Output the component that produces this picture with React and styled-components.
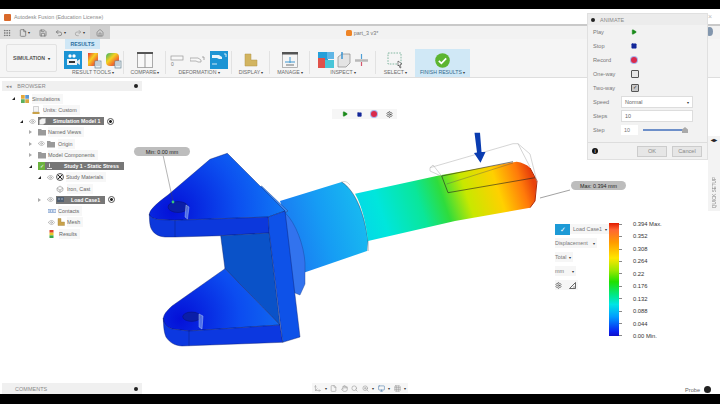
import React from "react";
import styled, { createGlobalStyle } from "styled-components";
import { Play, Square, Settings, Hand, Search, ZoomIn, Monitor, Grid3x3, File, Save, Undo2, Redo2, Home, Grip, Move3d, Eye } from "lucide-react";

const Global = createGlobalStyle`
  html, body { margin: 0; padding: 0; background: #fff; }
  body { font-family: "Liberation Sans", Arial, sans-serif; }
`;

const Page = styled.div`
  width: 720px;
  height: 404px;
  overflow: hidden;
  display: flex;
  flex-direction: column;
  background: #fff;
`;
const BlackBar = styled.div`
  height: ${(p) => p.$h}px;
  flex: none;
  background: #000;
`;
const TitleBar = styled.div`
  height: 14px;
  flex: none;
  display: flex;
  align-items: center;
  gap: 3px;
  padding: 1px 0 0 4px;
  font-size: 5.4px;
  color: #8a8a8a;
`;
const AppIcon = styled.span`
  width: 7px;
  height: 7px;
  background: #d9692a;
  border-radius: 1px;
`;
const QuickBar = styled.div`
  height: 13px;
  flex: none;
  border-top: 2px solid #c9c9c9;
  background: #f2f2f2;
  display: flex;
  align-items: center;
  position: relative;
`;
const QuickLeft = styled.div`
  width: 90px;
  height: 100%;
  background: #dcdcdc;
  display: flex;
  align-items: center;
  padding-left: 3px;
  box-sizing: border-box;
  color: #666;
`;
const QuickSlot = styled.span`
  width: ${(p) => p.$w}px;
  flex: none;
  display: flex;
  align-items: center;
  gap: 1px;
  color: ${(p) => p.$c || "#666"};
`;
const HomeTab = styled.div`
  width: 20px;
  height: 100%;
  background: #cfcfcf;
  display: flex;
  align-items: center;
  justify-content: center;
  color: #777;
`;
const DocTitle = styled.div`
  flex: 1;
  display: flex;
  justify-content: center;
  align-items: center;
  gap: 2px;
  font-size: 5.4px;
  color: #777;
  padding-right: 106px;
`;
const DocIcon = styled.span`
  width: 6px;
  height: 6px;
  border-radius: 1.5px;
  background: #ee8426;
`;
const UserBadge = styled.span`
  position: absolute;
  left: 706px;
  top: 1px;
  width: 7px;
  height: 9px;
  border-radius: 50%;
  background: #8296ad;
`;
const Ribbon = styled.div`
  height: 39px;
  flex: none;
  box-sizing: border-box;
  background: #f5f5f5;
  border-bottom: 1px solid #dedede;
  display: flex;
`;
const SimButton = styled.div`
  width: 51px;
  height: 28px;
  margin: 5px 5px 0 6px;
  flex: none;
  box-sizing: border-box;
  border: 1px solid #e2e2e2;
  border-radius: 2px;
  display: flex;
  align-items: center;
  justify-content: center;
  gap: 3px;
  font-size: 5.2px;
  font-weight: 700;
  color: #555;
`;
const Group = styled.div`
  width: ${(p) => p.$w}px;
  flex: none;
  position: relative;
  box-sizing: border-box;
  display: flex;
  flex-direction: column;
  align-items: center;
  background: ${(p) => (p.$active ? "#d0e8f6" : "transparent")};
  margin-top: ${(p) => (p.$active ? 10 : 0)}px;
  padding-top: ${(p) => (p.$active ? 2 : 12)}px;
  &::after {
    content: "";
    display: ${(p) => (p.$sep ? "block" : "none")};
    position: absolute;
    right: 0;
    top: 12px;
    bottom: 3px;
    width: 1px;
    background: #e2e2e2;
  }
`;
const RibbonTab = styled.div`
  position: absolute;
  left: 3px;
  top: 0;
  width: 35px;
  height: 10px;
  background: #cfe7f6;
  color: #2b6f9e;
  font-size: 5.2px;
  font-weight: 700;
  display: flex;
  align-items: center;
  justify-content: center;
`;
const IconRow = styled.div`
  height: 18px;
  display: flex;
  align-items: center;
  gap: ${(p) => p.$gap || 5}px;
`;
const GroupLabel = styled.div`
  font-size: 5.2px;
  color: ${(p) => (p.$active ? "#33688c" : "#6b6b6b")};
  white-space: nowrap;
  &::after { content: " ▾"; font-size: 4px; color: #333; }
`;
const Viewport = styled.div`
  flex: 1;
  position: relative;
  overflow: hidden;
  background: #fff;
`;
const ModelLayer = styled.svg`
  position: absolute;
  left: 0;
  top: 0;
  filter: blur(0.35px);
`;
const BrowserPanel = styled.div`
  position: absolute;
  left: 2px;
  top: 3px;
  width: 140px;
`;
const PanelHead = styled.div`
  height: 10px;
  background: #f0f0f0;
  display: flex;
  align-items: center;
  padding: 0 4px;
  gap: 5px;
  font-size: 5.4px;
  letter-spacing: 0.1px;
  color: #888;
`;
const HeadDot = styled.span`
  margin-left: auto;
  width: 4px;
  height: 4px;
  border-radius: 50%;
  background: #222;
`;
const Tree = styled.div`
  padding-top: 2px;
  display: flex;
  flex-direction: column;
`;
const TreeRow = styled.div`
  height: 11.25px;
  display: flex;
  align-items: center;
  padding-left: ${(p) => p.$indent}px;
  font-size: 5.4px;
  color: #666;
  white-space: nowrap;
`;
const Arrow = styled.span`
  width: 0;
  height: 0;
  margin-right: 6px;
  flex: none;
  ${(p) =>
    p.$open
      ? `border-right: 3px solid #222; border-top: 3px solid transparent;`
      : `border-left: 3px solid #aaa; border-top: 2.5px solid transparent; border-bottom: 2.5px solid transparent;`}
`;
const Slot = styled.span`
  width: ${(p) => p.$w || 9}px;
  flex: none;
  display: flex;
  align-items: center;
  color: ${(p) => p.$c || "#888"};
`;
const RowText = styled.span`
  padding: 2px 3px 2px 0;
  background: #f7f7f7;
`;
const DarkChip = styled.span`
  height: 8px;
  width: ${(p) => p.$w}px;
  flex: none;
  background: #777;
  display: flex;
  align-items: center;
  color: #fff;
  font-weight: 700;
  font-size: 5.2px;
`;
const ChipLead = styled.span`
  width: ${(p) => p.$w}px;
  height: 100%;
  flex: none;
  display: flex;
  align-items: center;
  padding-left: 1px;
  box-sizing: border-box;
`;
const CheckChip = styled.span`
  width: 7px;
  height: 8px;
  background: #6cb33f;
  color: #fff;
  font-size: 5px;
  line-height: 8px;
  text-align: center;
  flex: none;
`;
const Radio = styled.span`
  width: 5px;
  height: 5px;
  margin-left: 3px;
  border: 0.7px solid #555;
  border-radius: 50%;
  background: radial-gradient(circle, #222 0 1.2px, #fff 1.6px);
  flex: none;
`;
const CommentsBar = styled(PanelHead)`
  position: absolute;
  left: 2px;
  bottom: 0;
  width: 140px;
  height: 11px;
  box-sizing: border-box;
  padding-left: 13px;
`;
const PlayBar = styled.div`
  position: absolute;
  left: 332px;
  top: 31px;
  height: 10px;
  width: 65px;
  background: #f6f6f6;
  display: flex;
  align-items: center;
  gap: 9px;
  padding-left: 10px;
  box-sizing: border-box;
`;
const RecordDot = styled.span`
  width: 6px;
  height: 6px;
  border-radius: 50%;
  background: #d92a4c;
  box-shadow: 0 0 0 1px #a9b4ea;
  flex: none;
`;
const ViewTools = styled.div`
  position: absolute;
  left: 312px;
  bottom: 1px;
  height: 10px;
  width: 96px;
  display: flex;
  align-items: center;
  gap: 3.5px;
  padding-left: 2px;
  box-sizing: border-box;
  background: #f6f6f6;
  color: #999;
`;
const Caret = styled.span`
  font-size: 4px;
  color: #333;
`;
const Probe = styled.div`
  position: absolute;
  right: 9px;
  bottom: 1px;
  display: flex;
  align-items: center;
  gap: 4px;
  font-size: 5.6px;
  color: #666;
`;
const ProbeIcon = styled.span`
  width: 7px;
  height: 7px;
  border-radius: 50%;
  background: #222;
`;
const Pill = styled.div`
  position: absolute;
  left: ${(p) => p.$x}px;
  top: ${(p) => p.$y}px;
  width: ${(p) => p.$w}px;
  height: 9px;
  border-radius: 5px;
  background: #bdbdbd;
  color: #222;
  font-size: 5.4px;
  display: flex;
  align-items: center;
  justify-content: center;
`;
const Dialog = styled.div`
  position: absolute;
  left: 587px;
  top: 13px;
  width: 121px;
  height: 147px;
  box-sizing: border-box;
  background: #f2f2f2;
  border: 1px solid #e0e0e0;
  display: flex;
  flex-direction: column;
  z-index: 2;
`;
const DialogHead = styled(PanelHead)`
  height: 11px;
  background: #ececec;
  padding: 0 3px;
  flex: none;
`;
const HeadBullet = styled.span`
  width: 4px;
  height: 4px;
  border-radius: 50%;
  background: #222;
`;
const DialogBody = styled.div`
  flex: 1;
  padding: 0 14px 0 5px;
  display: grid;
  grid-template-columns: 28px 1fr;
  grid-auto-rows: 14px;
  align-items: center;
  font-size: 5.6px;
  color: #777;
`;
const FieldIcon = styled.span`
  padding-left: 10px;
  display: flex;
  align-items: center;
`;
const Check = styled.span`
  width: 5.5px;
  height: 5.5px;
  border: 0.8px solid #555;
  border-radius: 1px;
  background: ${(p) => (p.$on ? "#c8c8c8" : "#e8e8e8")};
  color: #222;
  font-size: 5px;
  line-height: 5.5px;
  text-align: center;
`;
const Field = styled.div`
  height: 12px;
  background: #fff;
  border: 0.5px solid #ddd;
  display: flex;
  align-items: center;
  justify-content: space-between;
  padding: 0 3px;
  box-sizing: border-box;
  color: #666;
  font-size: 5.4px;
`;
const StepRow = styled.div`
  display: flex;
  align-items: center;
  gap: 5px;
`;
const StepInput = styled.div`
  width: 17px;
  height: 10px;
  background: #fff;
  padding-left: 3px;
  box-sizing: border-box;
  line-height: 10px;
  font-size: 5.4px;
`;
const SliderTrack = styled.div`
  width: 43px;
  height: 2px;
  background: #6d8fc9;
  position: relative;
`;
const SliderThumb = styled.span`
  position: absolute;
  right: -2px;
  top: -2px;
  width: 6px;
  height: 6px;
  background: #aaa;
  clip-path: polygon(50% 0, 100% 40%, 100% 100%, 0 100%, 0 40%);
`;
const DialogFoot = styled.div`
  height: 16px;
  flex: none;
  border-top: 1px solid #ddd;
  display: flex;
  align-items: center;
  padding: 0 5px 0 4px;
  gap: 5px;
`;
const InfoDot = styled.span`
  width: 6px;
  height: 6px;
  border-radius: 50%;
  background: #111;
  color: #fff;
  font-size: 5px;
  line-height: 6px;
  text-align: center;
  margin-right: auto;
`;
const DialogBtn = styled.span`
  width: ${(p) => p.$w}px;
  height: 9px;
  background: #e6e6e6;
  border: 0.5px solid #ccc;
  color: #888;
  font-size: 5.6px;
  display: flex;
  align-items: center;
  justify-content: center;
`;
const CloseX = styled.span`
  position: absolute;
  left: 708px;
  top: 13px;
  font-size: 7px;
  color: #bbb;
`;
const SideTab = styled.div`
  position: absolute;
  right: 0;
  top: 58px;
  width: 12px;
  height: 75px;
  background: #f3f3f3;
  display: flex;
  flex-direction: column;
  align-items: center;
  justify-content: space-between;
  padding: 0 0 3px;
  box-sizing: border-box;
  font-size: 4.6px;
  color: #888;
`;
const SideArrows = styled.span`
  font-size: 6px;
  font-weight: 700;
  color: #222;
`;
const SideText = styled.span`
  writing-mode: vertical-rl;
  transform: rotate(180deg);
`;
const LegendCtl = styled.div`
  position: absolute;
  left: 555px;
  top: 146px;
  display: flex;
  flex-direction: column;
  align-items: flex-start;
  gap: 4px;
  font-size: 5.4px;
  color: #777;
`;
const CtlRow = styled.div`
  height: 10px;
  background: #f6f6f6;
  display: flex;
  align-items: center;
  gap: ${(p) => p.$gap || 3}px;
  padding-right: 2px;
  white-space: nowrap;
`;
const CtlCheck = styled.span`
  width: 15px;
  height: 11px;
  background: #1d9ad6;
  color: #fff;
  font-size: 7px;
  line-height: 11px;
  text-align: center;
`;
const ColorScale = styled.div`
  position: absolute;
  left: 609px;
  top: 145px;
  width: 10px;
  height: 113px;
  background: linear-gradient(to bottom, #e11b00 0%, #f63 6%, #ff9a00 17%, #ffe600 31%, #9be800 42%, #1fe000 52%, #00e88a 64%, #00e5e5 72%, #009cff 83%, #0a22f0 96%, #1010c8 100%);
`;
const ScaleTicks = styled.div`
  position: absolute;
  left: 619px;
  top: 146px;
  height: 112px;
  width: 4px;
  display: flex;
  flex-direction: column;
  justify-content: space-between;
`;
const Tick = styled.span`
  height: 0.7px;
  width: 3px;
  background: #888;
`;
const ScaleLabels = styled.div`
  position: absolute;
  left: 633px;
  top: 143px;
  height: 118px;
  display: flex;
  flex-direction: column;
  justify-content: space-between;
  font-size: 5.8px;
  color: #333;
`;

const treeRows = [
  { indent: 10, open: true, icon: "sim", slot: 11, text: "Simulations" },
  { indent: 30, icon: "units", slot: 11, text: "Units: Custom" },
  { indent: 18, open: true, eye: true, chip: "Simulation Model 1", w: 66, pad: 15, lead: "box", radio: true },
  { indent: 27, closed: true, icon: "folder", slot: 10, text: "Named Views" },
  { indent: 27, closed: true, eye: true, icon: "folder", slot: 11, text: "Origin" },
  { indent: 27, closed: true, icon: "folder", slot: 10, text: "Model Components" },
  { indent: 27, open: true, check: true, chip: "Study 1 - Static Stress", w: 79, pad: 19, lead: "load" },
  { indent: 36, open: true, eye: true, icon: "material", slot: 10, text: "Study Materials" },
  { indent: 54, icon: "iron", slot: 11, text: "Iron, Cast" },
  { indent: 36, closed: true, eye: true, chip: "Load Case1", w: 49, pad: 15, lead: "case", radio: true },
  { indent: 46, icon: "contacts", slot: 10, text: "Contacts" },
  { indent: 46, eye: true, icon: "mesh", slot: 10, text: "Mesh" },
  { indent: 46, icon: "results", slot: 11, text: "Results" },
];

const scaleValues = ["0.394 Max.", "0.352", "0.308", "0.264", "0.22", "0.176", "0.132", "0.088", "0.044", "0.00 Min."];

function TreeIcon({ kind }) {
  return (
    <svg width="8" height="8" viewBox="0 0 8 8">
      {kind === "sim" && (
        <>
          <rect x="0" y="0" width="4" height="4" fill="#e5a93a" />
          <rect x="4" y="0" width="4" height="4" fill="#5d9ad6" />
          <rect x="0" y="4" width="4" height="4" fill="#5cb05c" />
          <rect x="4" y="4" width="4" height="4" fill="#d9a640" />
          <path d="M0 4h8M4 0v8" stroke="#fff" strokeWidth="0.5" />
        </>
      )}
      {kind === "units" && (
        <>
          <path d="M1.500 0.500h5v5.500h-5z" fill="#f4f4f4" stroke="#aaa" strokeWidth="0.5" />
          <rect x="0.500" y="6" width="7" height="2" fill="#c9a24a" />
        </>
      )}
      {kind === "folder" && <path d="M0 1h3l1 1h4v5.500H0z" fill="#9a9a9a" />}
      {kind === "material" && (
        <>
          <circle cx="4" cy="4" r="3.500" fill="#eee" stroke="#222" strokeWidth="0.7" />
          <path d="M1.800 1.800l4.400 4.400M6.200 1.800L1.800 6.200" stroke="#222" strokeWidth="1" />
        </>
      )}
      {kind === "iron" && <path d="M1 3l3-2 3 2v2.500L4 7.500 1 5.500zM1 3l3 2 3-2M4 5v2.500" fill="#eee" stroke="#999" strokeWidth="0.6" />}
      {kind === "contacts" && (
        <>
          <rect x="0" y="2.500" width="8" height="3" fill="#dfe8f5" stroke="#6f93c7" strokeWidth="0.6" />
          <path d="M1.500 4h1.500M4 4h1.500" stroke="#3f6fb3" strokeWidth="0.8" />
        </>
      )}
      {kind === "mesh" && <path d="M1 0.500h3v3.500h3.500v3.500H1z" fill="#c9a24a" stroke="#a3843c" strokeWidth="0.4" />}
      {kind === "results" && (
        <>
          <rect x="1.500" y="0" width="4" height="2.700" fill="#e0402a" />
          <rect x="1.500" y="2.700" width="4" height="2.700" fill="#e8c62a" />
          <rect x="1.500" y="5.400" width="4" height="2.600" fill="#38a84a" />
        </>
      )}
    </svg>
  );
}

function ChipGlyph({ kind }) {
  return (
    <svg width="7" height="7" viewBox="0 0 7 7">
      {kind === "box" && <path d="M0.500 2L3 0.500h3.500V5L4 6.500H0.500z" fill="#f2f2f2" stroke="#bbb" strokeWidth="0.4" />}
      {kind === "load" && <path d="M3.500 0.500v3.500M1 5.500h5" stroke="#eee" strokeWidth="0.9" />}
      {kind === "case" && (
        <>
          <rect x="0" y="1" width="7" height="5" fill="#4f5f72" />
          <path d="M2 2v2M5 2v2" stroke="#d0d8e2" strokeWidth="0.7" />
        </>
      )}
    </svg>
  );
}

function HeatIcon({ soft }) {
  return (
    <svg width="17" height="17" viewBox="0 0 17 17">
      <defs>
        <linearGradient id={soft ? "h2" : "h1"} x1="0" y1="0" x2="1" y2="1">
          <stop offset="0" stopColor={soft ? "#2fb36a" : "#e33"} />
          <stop offset="0.4" stopColor="#f5d020" />
          <stop offset="0.7" stopColor="#f26a2e" />
          <stop offset="1" stopColor="#2aa6dc" />
        </linearGradient>
      </defs>
      <rect x={soft ? 1 : 3} y="1" width={soft ? 13 : 10} height="13" rx={soft ? 4 : 0} fill={`url(#${soft ? "h2" : "h1"})`} />
      <rect x="10" y="9" width="6" height="7" fill="#e8eef2" stroke="#6c8796" strokeWidth="0.7" />
      <path d="M11 11h4M11 13h4" stroke="#6c8796" strokeWidth="0.6" />
    </svg>
  );
}

function Ribbons() {
  return (
    <Ribbon>
      <SimButton>SIMULATION <Caret>▾</Caret></SimButton>
      <Group $w={62} $sep>
        <RibbonTab>RESULTS</RibbonTab>
        <IconRow $gap={3}>
          <svg width="18" height="18" viewBox="0 0 18 18">
            <rect width="18" height="18" fill="#1c94d4" />
            <rect x="3" y="8" width="10" height="6" fill="#eef3f6" />
            <path d="M13 10l3-2v6l-3-2z" fill="#dce6ec" />
            <circle cx="6" cy="5" r="1.7" fill="#fff" />
            <circle cx="10" cy="5" r="1.7" fill="#fff" />
            <rect x="5" y="10" width="6" height="2" fill="#333" />
          </svg>
          <HeatIcon />
          <HeatIcon soft />
        </IconRow>
        <GroupLabel>RESULT TOOLS</GroupLabel>
      </Group>
      <Group $w={42} $sep>
        <IconRow>
          <svg width="16" height="16" viewBox="0 0 16 16">
            <rect x="0.5" y="0.5" width="15" height="15" fill="#f8f8f8" stroke="#aaa" />
            <rect x="0" y="0" width="16" height="2" fill="#555" />
            <path d="M8 2v14" stroke="#999" />
          </svg>
        </IconRow>
        <GroupLabel>COMPARE</GroupLabel>
      </Group>
      <Group $w={66} $sep>
        <IconRow $gap={5}>
          <svg width="15" height="15" viewBox="0 0 15 15">
            <rect x="1" y="3" width="12" height="4" fill="#f8f8f8" stroke="#999" strokeWidth="0.7" />
            <text x="1" y="13" fontSize="5" fill="#777" fontFamily="Liberation Sans">0</text>
          </svg>
          <svg width="15" height="15" viewBox="0 0 15 15">
            <path d="M0 5h8l3 2v2H8L6 8H0z" fill="#f8f8f8" stroke="#999" strokeWidth="0.7" />
            <path d="M12 4h2v3" fill="none" stroke="#888" strokeWidth="0.7" />
          </svg>
          <svg width="18" height="18" viewBox="0 0 18 18">
            <rect width="18" height="18" fill="#1c94d4" />
            <path d="M2 4h7l3 2v2H9L7 7H2z" fill="#e8f4fb" />
            <path d="M14 3h2v3M2 13h5" stroke="#fff" strokeWidth="0.8" fill="none" />
          </svg>
        </IconRow>
        <GroupLabel>DEFORMATION</GroupLabel>
      </Group>
      <Group $w={38} $sep>
        <IconRow>
          <svg width="14" height="14" viewBox="0 0 14 14">
            <path d="M1 1h6v6h6v6H1z" fill="#d2b45f" stroke="#b3964a" strokeWidth="0.5" />
          </svg>
        </IconRow>
        <GroupLabel>DISPLAY</GroupLabel>
      </Group>
      <Group $w={40} $sep>
        <IconRow>
          <svg width="16" height="16" viewBox="0 0 16 16">
            <rect x="0.5" y="0.5" width="15" height="15" fill="#f6f6f6" stroke="#999" strokeWidth="0.7" />
            <rect x="0" y="0" width="16" height="2.5" fill="#555" />
            <path d="M3 10h10M8 5v6" stroke="#3f97d0" strokeWidth="1" />
            <path d="M4 13h8" stroke="#888" strokeWidth="1.2" />
          </svg>
        </IconRow>
        <GroupLabel>MANAGE</GroupLabel>
      </Group>
      <Group $w={66} $sep>
        <IconRow $gap={3}>
          <svg width="16" height="16" viewBox="0 0 16 16">
            <rect x="0" y="0" width="10" height="10" fill="#26a0da" />
            <rect x="9" y="0" width="7" height="7" fill="#5fb6e6" />
            <rect x="0" y="6" width="7" height="10" fill="#e0524a" />
            <rect x="7" y="8" width="9" height="8" fill="#49c6d8" />
          </svg>
          <svg width="14" height="16" viewBox="0 0 14 16">
            <path d="M1 5l4-3h8v9l-4 4H1z" fill="#e4e4e4" stroke="#8a8a8a" strokeWidth="0.7" />
            <path d="M5 0v7" stroke="#2f8fd0" strokeWidth="1.4" />
          </svg>
          <svg width="15" height="15" viewBox="0 0 15 15">
            <path d="M1 7.5h13" stroke="#b9b9b9" strokeWidth="2.5" />
            <path d="M7.5 1v5" stroke="#4f9fd6" strokeWidth="1.2" />
            <path d="M7.5 9v4" stroke="#d5566c" strokeWidth="1.2" />
          </svg>
        </IconRow>
        <GroupLabel>INSPECT</GroupLabel>
      </Group>
      <Group $w={39}>
        <IconRow>
          <svg width="17" height="17" viewBox="0 0 17 17">
            <rect x="1" y="1" width="13" height="11" fill="none" stroke="#67a88d" strokeWidth="0.8" strokeDasharray="1.6 1.2" />
            <path d="M11 9l4 3-2 .5 1 3-1 .5-1-3-1 1z" fill="#fff" stroke="#333" strokeWidth="0.6" />
          </svg>
        </IconRow>
        <GroupLabel>SELECT</GroupLabel>
      </Group>
      <Group $w={55} $active>
        <IconRow>
          <svg width="15" height="15" viewBox="0 0 15 15">
            <circle cx="7.5" cy="7.5" r="7.3" fill="#5cb531" />
            <path d="M3.8 7.8l2.6 2.6 4.8-5" fill="none" stroke="#fff" strokeWidth="1.7" />
          </svg>
        </IconRow>
        <GroupLabel $active>FINISH RESULTS</GroupLabel>
      </Group>
    </Ribbon>
  );
}

function Browser() {
  return (
    <BrowserPanel>
      <PanelHead>
        <span>◂◂</span>
        <span>BROWSER</span>
        <HeadDot />
      </PanelHead>
      <Tree>
        {treeRows.map((r, i) => (
          <TreeRow key={i} $indent={r.indent}>
            {r.open && <Arrow $open />}
            {r.closed && <Arrow />}
            {r.eye && <Slot $w={9} $c="#999"><Eye size={7} /></Slot>}
            {r.check && <CheckChip>✓</CheckChip>}
            {r.icon && <Slot $w={r.slot}><TreeIcon kind={r.icon} /></Slot>}
            {r.text && <RowText>{r.text}</RowText>}
            {r.chip && (
              <DarkChip $w={r.w}>
                <ChipLead $w={r.pad}><ChipGlyph kind={r.lead} /></ChipLead>
                {r.chip}
              </DarkChip>
            )}
            {r.radio && <Radio />}
          </TreeRow>
        ))}
      </Tree>
    </BrowserPanel>
  );
}

function Model() {
  return (
    <ModelLayer width="720" height="317" viewBox="0 77 720 317">
      <defs>
        <linearGradient id="shaft" gradientUnits="userSpaceOnUse" x1="345" y1="240" x2="532" y2="178">
          <stop offset="0" stopColor="#08cdf0" />
          <stop offset="0.22" stopColor="#00e6dc" />
          <stop offset="0.42" stopColor="#0ae69a" />
          <stop offset="0.54" stopColor="#2fdc3c" />
          <stop offset="0.66" stopColor="#c8e800" />
          <stop offset="0.82" stopColor="#ffd000" />
          <stop offset="0.94" stopColor="#ff7a0a" />
          <stop offset="1" stopColor="#e8420a" />
        </linearGradient>
        <linearGradient id="boss" gradientUnits="userSpaceOnUse" x1="280" y1="240" x2="368" y2="215">
          <stop offset="0" stopColor="#1b74f2" />
          <stop offset="0.5" stopColor="#169cf4" />
          <stop offset="1" stopColor="#18bcf0" />
        </linearGradient>
        <radialGradient id="lugTop" gradientUnits="userSpaceOnUse" cx="172" cy="210" r="110">
          <stop offset="0" stopColor="#0410d8" />
          <stop offset="0.6" stopColor="#0c50f0" />
          <stop offset="1" stopColor="#1076f4" />
        </radialGradient>
        <radialGradient id="lugLow" gradientUnits="userSpaceOnUse" cx="180" cy="318" r="100">
          <stop offset="0" stopColor="#0410d8" />
          <stop offset="0.6" stopColor="#0c4cf0" />
          <stop offset="1" stopColor="#1068f0" />
        </radialGradient>
      </defs>

      <path d="M280 200L341.7 181C356 190 365 215 368 240L367 250L303 272Z" fill="url(#boss)" />
      <path d="M341.7 181Q346 179 350 184" fill="none" stroke="#999" strokeWidth="0.4" />
      <path d="M341.7 181C356 190 365 215 368 240V250" fill="none" stroke="#223" strokeWidth="0.4" />
      <path d="M355 192.7L440 174.3L516.7 160.7Q525 162 530 166.7L536.7 180L535 200L530 206.7L455 220L368 240C366 222 362 205 355 192.7Z" fill="url(#shaft)" />
      <path d="M530 167L537 180L535 200L530 206.7" fill="none" stroke="#b02a08" strokeWidth="1" />
      <path d="M441.7 175L513 160.7M448 191.7L535 176.7M441.7 175L448 191.7" fill="none" stroke="#222" strokeWidth="0.6" />
      <path d="M446.7 183L513 162" fill="none" stroke="#555" strokeWidth="0.4" />
      <path d="M430 166.7L513 142.7H518L530 153L535 173L536.7 180M430 166.7L433 164L441.7 175M518 142.7L530 166" fill="none" stroke="#aaa" strokeWidth="0.5" />
      <path d="M430 166.7V170L441 175" fill="none" stroke="#aaa" strokeWidth="0.5" />

      <path d="M285 211.7C296 222 304 245 305 262L305 283L300 294L290 290L278 215Z" fill="#3273ee" stroke="#1a3f90" strokeWidth="0.4" />
      <path d="M261.7 185L288 210L285 211.7L260 186Z" fill="#3a86ee" stroke="#224" strokeWidth="0.3" />

      <path d="M168 194L210 158.3L227.3 152.3L285 210L268.3 216L175 219.3L158 218.5Q149 217 149.3 213Q150 207 168 194Z" fill="url(#lugTop)" stroke="#0a1a66" strokeWidth="0.4" />
      <path d="M149.3 213C149.5 222 150 226 152 229C155 234 160 235.5 165 236H175L220.7 234.7L269.3 232L268.3 216L175 219.3L158 218.5Q150 217 149.3 213Z" fill="#0c38dc" stroke="#0a1a66" strokeWidth="0.4" />
      <path d="M175 219.3V236" stroke="#0a1a66" strokeWidth="0.4" />
      <path d="M220.7 234.7L269.3 232L280 324L225 267.7Z" fill="#0a52c8" stroke="#0a1a66" strokeWidth="0.4" />
      <path d="M225 267.7L280 324L189 330L172 328Q163 325 163.3 317Q164 312 172 305Z" fill="url(#lugLow)" stroke="#0a1a66" strokeWidth="0.4" />
      <path d="M163.3 317C163.5 326 164 331 166 336C170 342 175 344.5 182 345L282.7 341.3L280 324L189 330L172 328Q164 325 163.3 317Z" fill="#0c38e0" stroke="#0a1a66" strokeWidth="0.4" />
      <path d="M189 330V345" stroke="#0a1a66" strokeWidth="0.4" />
      <path d="M268.3 216L285 210L300 336L282.7 341.3L269.3 232Z" fill="#0e52e8" stroke="#0a1a66" strokeWidth="0.4" />

      <ellipse cx="178" cy="206" rx="10" ry="5.5" fill="#0a1ea8" stroke="#0a1060" strokeWidth="0.4" />
      <ellipse cx="191.7" cy="315.7" rx="9" ry="4.7" fill="#0a1ea8" stroke="#0a1060" strokeWidth="0.4" />
      <path d="M186 204L189 206L187.5 218L185 216Z" fill="#7fa4ee" fillOpacity="0.6" stroke="#c8d8f8" strokeWidth="0.4" />
      <path d="M199 313L203 315L202 328L199 326Z" fill="#7fa4ee" fillOpacity="0.6" stroke="#c8d8f8" strokeWidth="0.4" />

      <path d="M163 154L173 200" stroke="#444" strokeWidth="0.4" />
      <circle cx="173" cy="201" r="1.4" fill="#39c47a" />
      <path d="M570 189L540 197" stroke="#444" strokeWidth="0.5" />
      <path d="M474.5 131.7L480 131.7L481.5 151L485.5 151L480.5 161.7L474 152L477 151.5Z" fill="#0a3cb0" />
    </ModelLayer>
  );
}

function AnimateDialog() {
  return (
    <Dialog>
      <DialogHead>
        <HeadBullet />
        <span>ANIMATE</span>
      </DialogHead>
      <DialogBody>
        <span>Play</span>
        <FieldIcon><Play size={6} fill="#1a8a1a" color="#1a8a1a" /></FieldIcon>
        <span>Stop</span>
        <FieldIcon><Square size={6} fill="#14289a" color="#14289a" /></FieldIcon>
        <span>Record</span>
        <FieldIcon><RecordDot /></FieldIcon>
        <span>One-way</span>
        <FieldIcon><Check /></FieldIcon>
        <span>Two-way</span>
        <FieldIcon><Check $on>✓</Check></FieldIcon>
        <span>Speed</span>
        <Field>Normal <Caret>▾</Caret></Field>
        <span>Steps</span>
        <Field>10</Field>
        <span>Step</span>
        <StepRow>
          <StepInput>10</StepInput>
          <SliderTrack><SliderThumb /></SliderTrack>
        </StepRow>
      </DialogBody>
      <DialogFoot>
        <InfoDot>i</InfoDot>
        <DialogBtn $w={28}>OK</DialogBtn>
        <DialogBtn $w={28}>Cancel</DialogBtn>
      </DialogFoot>
    </Dialog>
  );
}

export default function App() {
  return (
    <>
      <Global />
      <Page>
        <BlackBar $h={9} />
        <TitleBar>
          <AppIcon />
          <span>Autodesk Fusion (Education License)</span>
        </TitleBar>
        <QuickBar>
          <QuickLeft>
            <QuickSlot $w={16}><Grip size={8} /></QuickSlot>
            <QuickSlot $w={20}><File size={8} /><Caret>▾</Caret></QuickSlot>
            <QuickSlot $w={16}><Save size={8} /></QuickSlot>
            <QuickSlot $w={19}><Undo2 size={8} /><Caret>▾</Caret></QuickSlot>
            <QuickSlot $w={16} $c="#999"><Redo2 size={8} /><Caret>▾</Caret></QuickSlot>
          </QuickLeft>
          <HomeTab><Home size={8} /></HomeTab>
          <DocTitle><DocIcon /> part_3 v3*</DocTitle>
          <UserBadge />
        </QuickBar>
        <Ribbons />
        <Viewport>
          <Model />
          <Browser />
          <PlayBar>
            <Play size={6} fill="#1a8a1a" color="#1a8a1a" />
            <Square size={5} fill="#14289a" color="#14289a" />
            <RecordDot />
            <Settings size={7} color="#333" />
          </PlayBar>
          <Pill $x={134} $y={69} $w={56}>Min: 0.00 mm</Pill>
          <Pill $x={571} $y={103} $w={55}>Max: 0.394 mm</Pill>
          <SideTab>
            <SideArrows>◂▸</SideArrows>
            <SideText>QUICK SETUP</SideText>
          </SideTab>
          <LegendCtl>
            <CtlRow><CtlCheck>✓</CtlCheck>Load Case1 <Caret>▾</Caret></CtlRow>
            <CtlRow $gap={5}>Displacement <Caret>▾</Caret></CtlRow>
            <CtlRow>Total <Caret>▾</Caret></CtlRow>
            <CtlRow $gap={8}>mm <Caret>▾</Caret></CtlRow>
            <CtlRow $gap={7}>
              <Settings size={7} color="#444" />
              <svg width="7" height="7" viewBox="0 0 7 7">
                <path d="M0.500 6.500L6.500 0.500V6.500Z" fill="none" stroke="#444" strokeWidth="0.8" />
                <path d="M4.500 4.500h1v1h-1z" fill="#444" />
              </svg>
            </CtlRow>
          </LegendCtl>
          <ColorScale />
          <ScaleTicks>
            {scaleValues.map((v) => <Tick key={v} />)}
          </ScaleTicks>
          <ScaleLabels>
            {scaleValues.map((v) => <span key={v}>{v}</span>)}
          </ScaleLabels>
          <CommentsBar>
            <span>COMMENTS</span>
            <HeadDot />
          </CommentsBar>
          <ViewTools>
            <Move3d size={7} /><Caret>▾</Caret>
            <File size={7} />
            <Hand size={7} />
            <Search size={7} />
            <ZoomIn size={7} /><Caret>▾</Caret>
            <Monitor size={7} color="#4f7fb0" /><Caret>▾</Caret>
            <Grid3x3 size={7} /><Caret>▾</Caret>
          </ViewTools>
          <Probe>
            <span>Probe</span>
            <ProbeIcon />
          </Probe>
        </Viewport>
        <BlackBar $h={10} />
      </Page>
      <AnimateDialog />
      <CloseX>×</CloseX>
    </>
  );
}
